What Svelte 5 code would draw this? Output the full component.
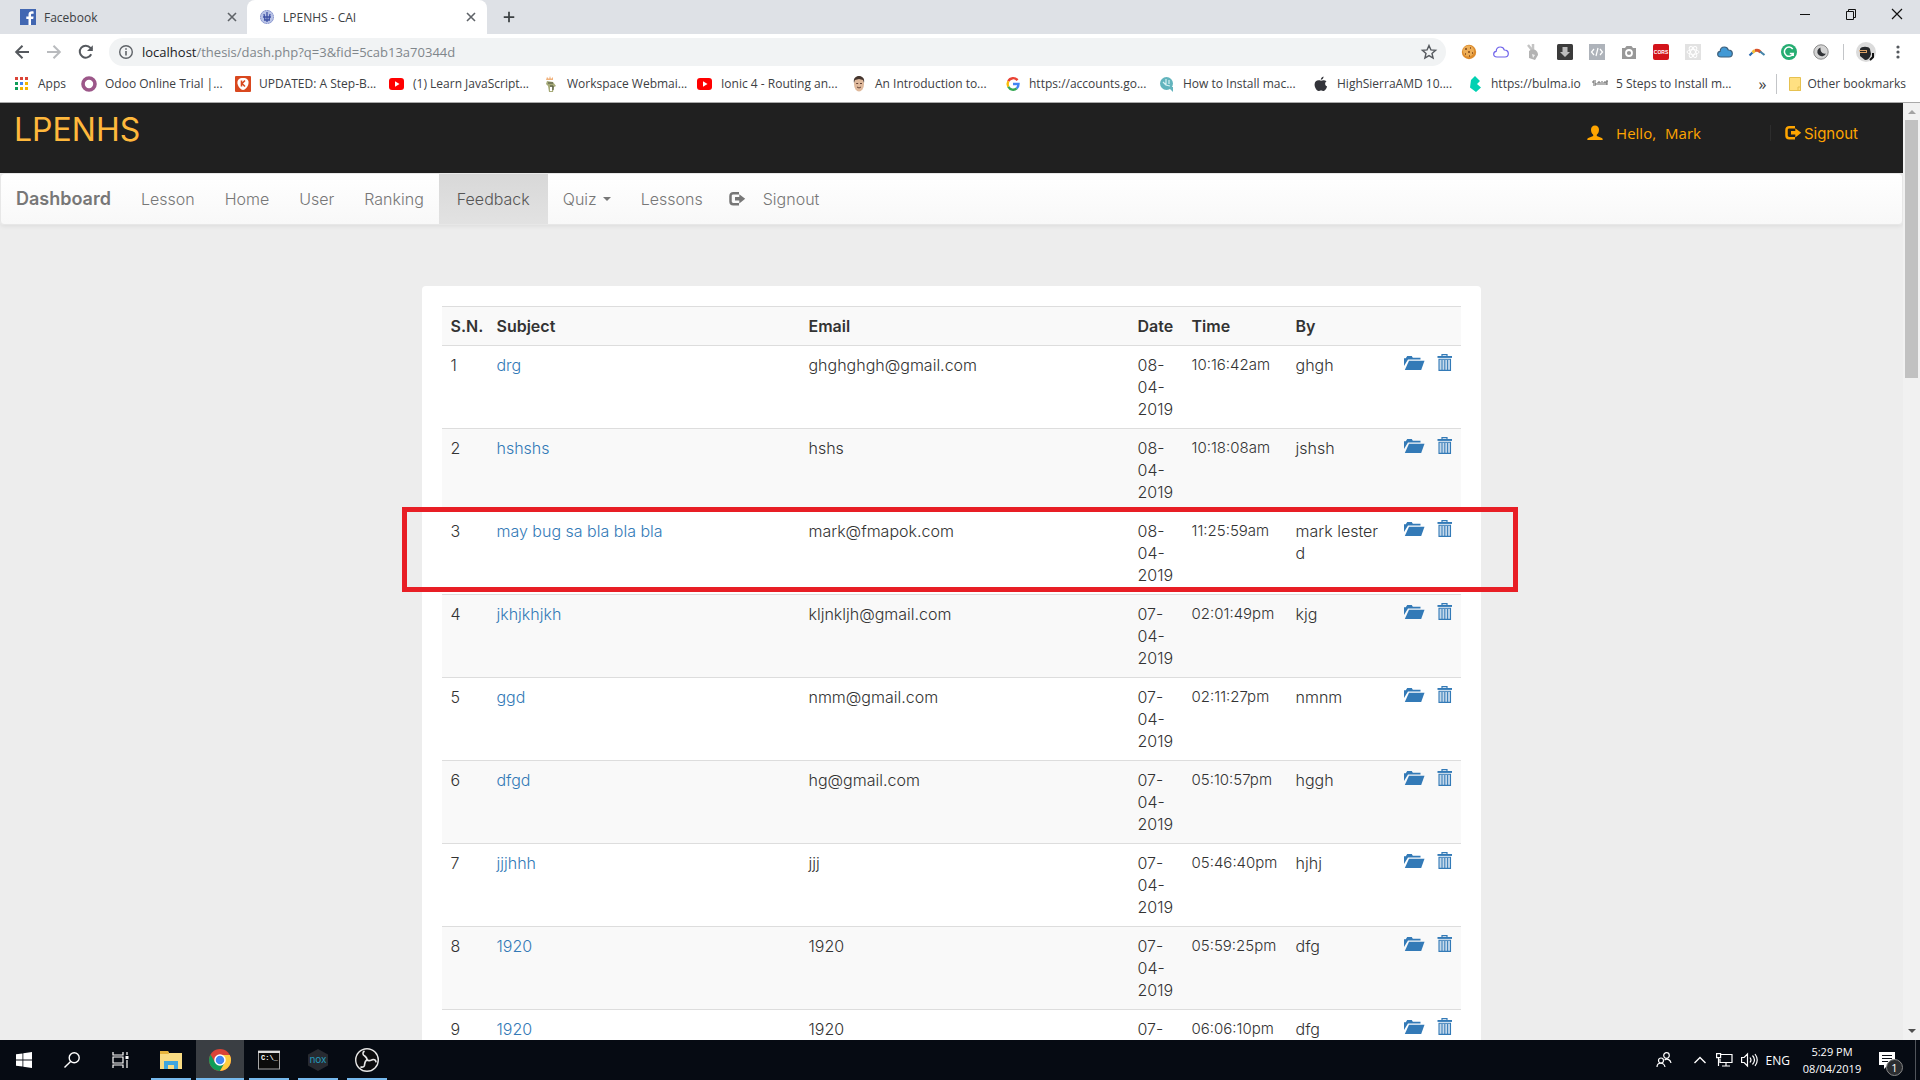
<script>
  const rows = [
    [1, 'drg', 'ghghghgh@gmail.com', '08-04-2019', '10:16:42am', 'ghgh'],
    [2, 'hshshs', 'hshs', '08-04-2019', '10:18:08am', 'jshsh'],
    [3, 'may bug sa bla bla bla', 'mark@fmapok.com', '08-04-2019', '11:25:59am', 'mark lester d'],
    [4, 'jkhjkhjkh', 'kljnkljh@gmail.com', '07-04-2019', '02:01:49pm', 'kjg'],
    [5, 'ggd', 'nmm@gmail.com', '07-04-2019', '02:11:27pm', 'nmnm'],
    [6, 'dfgd', 'hg@gmail.com', '07-04-2019', '05:10:57pm', 'hggh'],
    [7, 'jjjhhh', 'jjj', '07-04-2019', '05:46:40pm', 'hjhj'],
    [8, '1920', '1920', '07-04-2019', '05:59:25pm', 'dfg'],
    [9, '1920', '1920', '07-04-2019', '06:06:10pm', 'dfg'],
  ];
  const bookmarks = [
    ['odoo', 'Odoo Online Trial |...'],
    ['kinsta', 'UPDATED: A Step-B...'],
    ['youtube', '(1) Learn JavaScript...'],
    ['workspace', 'Workspace Webmai...'],
    ['youtube', 'Ionic 4 - Routing an...'],
    ['face', 'An Introduction to...'],
    ['google', 'https://accounts.go...'],
    ['howto', 'How to Install mac...'],
    ['apple', 'HighSierraAMD 10....'],
    ['bulma', 'https://bulma.io'],
    ['saint', '5 Steps to Install m...'],
  ];
  const extensions = ['cookie', 'cloud', 'rabbit', 'download', 'code', 'camera', 'cors', 'react', 'cloudblue', 'arc', 'grammarly', 'moon'];
  const tasks = ['explorer', 'chrome', 'cmd', 'nox', 'obs'];
</script>

{#snippet icon(name)}
  <svg class="icon" width="16" height="16" viewBox="0 0 16 16" fill="none" aria-hidden="true">
    {#if name === 'facebook'}
      <rect width="16" height="16" fill="#4267b2" /><path d="M11 16V10h2.200l.4-2.500H11V6c0-.8.3-1.300 1.400-1.300h1.200V2.500C11 2 8.500 2.500 8.500 5.600v1.900H6.300V10h2.200v6z" fill="#fff" />
    {:else if name === 'seal'}
      <circle cx="8" cy="8" r="7" fill="#b9c3e6" /><circle cx="8" cy="8" r="6.500" stroke="#8591cb" stroke-dasharray="1.500 1" /><path d="M8 3v10M5 5l1 6M11 5l-1 6M4 8h8M5 11h6" stroke="#3e51a5" stroke-width="1.300" />
    {:else if name === 'close'}
      <path d="M4 4l8 8M12 4l-8 8" stroke="#5f6368" stroke-width="1.600" />
    {:else if name === 'plus'}
      <path d="M8 2v12M2 8h12" stroke="#3c4043" stroke-width="2" />
    {:else if name === 'back'}
      <path d="M15 8H2.500M8.500 1.800L2.200 8l6.300 6.200" stroke="#55595e" stroke-width="2" />
    {:else if name === 'forward'}
      <path d="M1 8h12.500M7.500 1.800L13.800 8l-6.300 6.200" stroke="#b9bbbe" stroke-width="2" />
    {:else if name === 'reload'}
      <path d="M13.200 10.200A6 6 0 1 1 12.400 3.800L14 5.500" stroke="#55595e" stroke-width="2" /><path d="M14.800 1.200v5.800H9z" fill="#55595e" />
    {:else if name === 'info'}
      <circle cx="8" cy="8" r="6.300" stroke="#5f6368" stroke-width="1.400" /><path d="M8 7v4.500M8 4.200v1.500" stroke="#5f6368" stroke-width="1.600" />
    {:else if name === 'star'}
      <path d="M8 1.500l1.900 4.400 4.700.4-3.600 3.100 1.100 4.700L8 11.600l-4.100 2.500L5 9.400 1.400 6.300l4.700-.4z" stroke="#55595e" stroke-width="1.400" />
    {:else if name === 'apps'}
      {#each ['#db4437', '#db4437', '#db4437', '#0f9d58', '#4285f4', '#f4b400', '#0f9d58', '#f4b400', '#f4b400'] as c, i}
        <rect x={1 + (i % 3) * 5} y={1 + Math.floor(i / 3) * 5} width="3" height="3" fill={c} />
      {/each}
    {:else if name === 'odoo'}
      <circle cx="8" cy="8" r="6" stroke="#9c5789" stroke-width="3.600" />
    {:else if name === 'kinsta'}
      <rect width="16" height="16" rx="1" fill="#d9481f" /><path d="M8 2c4 0 6 2 5.500 5.500C13 11 10 14 8 14s-5-3-5.500-6.500C2 4 4 2 8 2z" fill="#fff" /><path d="M6.500 4.500v6M10 4.500L7 7.500l3 3" stroke="#d9481f" stroke-width="1.600" />
    {:else if name === 'youtube'}
      <rect y="2" width="15" height="12" rx="3" fill="#f00" /><path d="M6 5.300L10.500 8 6 10.700z" fill="#fff" />
    {:else if name === 'workspace'}
      <path d="M3 4l1-3 2 2 1-3 1 3 2-2v3z" fill="#f1b27c" /><path d="M4 5l6 1 3 4-2 1-1 5H6L5 10 3 8z" fill="#a6aa78" /><path d="M5 7h5M7 10h3v4" stroke="#4c5141" /><path d="M7 11h2v4H7z" fill="#fff" />
    {:else if name === 'face'}
      <ellipse cx="8" cy="8" rx="5" ry="7.500" fill="#dfb99c" /><path d="M3 7C2 2 5 0 8 0s6 2 5 7l-1-3-4-1-4 1z" fill="#46362f" /><path d="M5.200 7.500h2M9 7.500h2M6 11q2 2 4 0" stroke="#634235" />
    {:else if name === 'google'}
      <path d="M12.500 4.200A5.500 5.500 0 0 0 3.300 5.200" stroke="#ea4335" stroke-width="2.400" /><path d="M3.300 5.200a6 6 0 0 0 0 5.600" stroke="#fbbc05" stroke-width="2.400" /><path d="M3.300 10.800a5.500 5.500 0 0 0 8.400 1.600" stroke="#34a853" stroke-width="2.400" /><path d="M8 8h5.500c0 2-.6 3.400-1.800 4.400" stroke="#4285f4" stroke-width="2.400" />
    {:else if name === 'howto'}
      <circle cx="7.500" cy="7.500" r="6.500" fill="#62b4bd" /><path d="M9 11h5v5z" fill="#62b4bd" /><path d="M7 3v6l4 1M4 6l3 3M10 4v4" stroke="#d6f0f2" stroke-width="1.200" />
    {:else if name === 'apple'}
      <path d="M10.500.5c.2 1.800-1 3.200-2.700 3.300C7.700 2.200 9 .8 10.500.5zM8 4.800C9 4.600 10.600 3.500 13.500 5.200c-2 1.500-1.700 4.300.6 5.300-.8 2.200-2 4.500-3.500 4.500-1 0-1.400-.5-2.500-.5S6.500 15 5.600 15C3.500 15 1.400 11 1.600 8.300 1.800 4.500 5 3.700 8 4.800z" fill="#33343a" />
    {:else if name === 'bulma'}
      <path d="M8 0l5 5-3 3 4 3.500L9 16l-6-4.500L4 4z" fill="#00d1b2" />
    {:else if name === 'saint'}
      <path d="M1 5h3M1 5v2h3v2H1M6 9V6h2v3M10 5v4M12 6v3M12 6h2v3M14 5h2M15 5v4" stroke="#666" />
    {:else if name === 'folder'}
      <path d="M2.500 1.500h11v13h-11z" fill="#ffe082" stroke="#e6c150" /><path d="M11 11h2.500v3.500H11z" stroke="#e6c150" />
    {:else if name === 'cookie'}
      <circle cx="8" cy="8" r="7.200" fill="#dd8c2d" /><circle cx="7.500" cy="7" r="5.500" fill="#edae57" /><path d="M4 5h2M9 4h1M7 8h2M11 9h1M4 10h1M8 12h1" stroke="#7d451c" stroke-width="1.500" />
    {:else if name === 'cloud' || name === 'cloudblue'}
      <path d="M4 13C1.500 13 .7 11.500.7 10.200c0-1.500 1-2.700 2.500-2.900C3.300 4.700 5 3 7.400 3c2 0 3.400 1.200 3.900 3 2.500 0 4 1.300 4 3.500S14 13 12 13z" fill={name === 'cloud' ? '#fff' : '#4299d5'} stroke={name === 'cloud' ? '#6f63ea' : '#3c5f7b'} stroke-width="1.200" />
    {:else if name === 'rabbit'}
      <path d="M3 1l4 5M8 0v6" stroke="#c4c4c4" stroke-width="2.500" /><path d="M4 7c4-3 9-1 9 4l-3 5-6-2z" fill="#b3b3b3" /><path d="M7 10l3 1-2 3z" fill="#eee" />
    {:else if name === 'download'}
      <rect width="16" height="16" rx="1.500" fill="#3b3b3b" /><path d="M5.500 3h5v5H13l-5 5-5-5h2.500z" fill="#bdbdbd" />
    {:else if name === 'code'}
      <rect width="16" height="16" fill="#aeb3ba" /><path d="M5 5L2.500 8 5 11M11 5l2.500 3-2.500 3M9 4l-2 8" stroke="#fff" stroke-width="1.200" />
    {:else if name === 'camera'}
      <path d="M1 4h3l1.500-2h5L12 4h3v11H1z" fill="#989898" /><circle cx="8" cy="9" r="3" stroke="#fff" stroke-width="1.800" />
    {:else if name === 'cors'}
      <rect width="16" height="16" rx="2" fill="#d3131a" /><text x="8" y="10" class="tiny">CORS</text>
    {:else if name === 'react'}
      <rect width="16" height="16" fill="#e2e2e2" /><g stroke="#fff"><ellipse cx="8" cy="8" rx="6" ry="2.400" /><ellipse cx="8" cy="8" rx="6" ry="2.400" transform="rotate(60 8 8)" /><ellipse cx="8" cy="8" rx="6" ry="2.400" transform="rotate(120 8 8)" /></g>
    {:else if name === 'arc'}
      <path d="M.500 11.500l3-3" stroke="#2b69b1" stroke-width="2.200" /><path d="M3.500 8.500l2.500-2" stroke="#f0bf38" stroke-width="3" /><path d="M6 6.500q4-1 5.500 2" stroke="#d9532c" stroke-width="3" /><path d="M11 7.500l4.500 3.500" stroke="#4584a9" stroke-width="2.200" />
    {:else if name === 'grammarly'}
      <circle cx="8" cy="8" r="8" fill="#26ad72" /><path d="M11.700 5A4.600 4.600 0 1 0 12.200 9.500H8.800M12.200 9.500V12" stroke="#fff" stroke-width="1.500" />
    {:else if name === 'moon'}
      <circle cx="8" cy="8" r="7.200" fill="#d3d3d3" stroke="#8b8b8b" /><path d="M7.500 3.500A4.500 4.500 0 1 0 13 9.500C10 10.500 7 8 7.500 3.500z" fill="#303236" />
    {:else if name === 'dots'}
      <circle cx="8" cy="3" r="1.600" fill="#55595e" /><circle cx="8" cy="8" r="1.600" fill="#55595e" /><circle cx="8" cy="13" r="1.600" fill="#55595e" />
    {:else if name === 'min'}
      <path d="M3 8.500h10" stroke="#111" />
    {:else if name === 'restore'}
      <path d="M3.500 5.500h7v8h-7zM5.500 5V3.500h7v8H11" stroke="#111" />
    {:else if name === 'winclose'}
      <path d="M3 3l10 10M13 3L3 13" stroke="#111" stroke-width="1.200" />
    {:else if name === 'user'}
      <path d="M8 .5c2.500 0 4 1.800 4 4.200 0 2.200-.9 4-2.200 5v1.300l5 2c.7.300.9.800.9 2H.3c0-1.200.2-1.700.9-2l5-2V9.700C4.900 8.700 4 6.900 4 4.700 4 2.300 5.500.5 8 .5z" fill="currentColor" />
    {:else if name === 'signout'}
      <path d="M10 2.200H4.200A2.700 2.700 0 0 0 1.500 4.900v5.700a2.700 2.700 0 0 0 2.700 2.700H10" stroke="currentColor" stroke-width="2.500" /><path d="M6 6.100h4.300V3.200l5.900 4.600-5.900 4.600V9.500H6z" fill="currentColor" />
    {/if}
  </svg>
{/snippet}

{#snippet openIcon()}
  <svg width="20" height="16" viewBox="0 0 20 16" aria-hidden="true"><path d="M0 12V4.200h1.800L3.200 2h4.600l1 1.700h7.700v1.900H4z" fill="currentColor" /><path d="M5 6.800h15.500L17.200 16H.8z" fill="currentColor" /></svg>
{/snippet}
{#snippet trashIcon()}
  <svg width="16" height="17" viewBox="0 0 16 17" aria-hidden="true"><path d="M5 2V.6h5V2" fill="none" stroke="currentColor" stroke-width="1.200" /><path d="M.500 2H15V3.900H.5z" fill="currentColor" /><path d="M2 5.200h11.500v11.200H2z" fill="#c4d8ea" stroke="currentColor" stroke-width="1.100" /><path d="M5 6v10M7.800 6v10M10.600 6v10" stroke="currentColor" /></svg>
{/snippet}

<div class="screen">
  <header class="chrome">
    <div class="tabs">
      <div class="tab">{@render icon('facebook')}<span>Facebook</span><button aria-label="Close Facebook tab">{@render icon('close')}</button></div>
      <div class="tab active">{@render icon('seal')}<span>LPENHS - CAI</span><button aria-label="Close LPENHS tab">{@render icon('close')}</button></div>
      <button class="newtab" aria-label="New tab">{@render icon('plus')}</button>
      <div class="controls">
        <button aria-label="Minimize">{@render icon('min')}</button>
        <button aria-label="Restore">{@render icon('restore')}</button>
        <button aria-label="Close">{@render icon('winclose')}</button>
      </div>
    </div>
    <div class="toolbar">
      <button aria-label="Back">{@render icon('back')}</button>
      <button aria-label="Forward">{@render icon('forward')}</button>
      <button aria-label="Reload">{@render icon('reload')}</button>
      <div class="omnibox">
        {@render icon('info')}
        <label for="url">localhost</label>
        <input id="url" type="text" value="/thesis/dash.php?q=3&fid=5cab13a70344d" />
        <button aria-label="Bookmark this page">{@render icon('star')}</button>
      </div>
      <div class="extensions">
        {#each extensions as name}<button aria-label={name}>{@render icon(name)}</button>{/each}
      </div>
      <button class="profile" aria-label="Profile">
        <svg width="20" height="20" viewBox="0 0 20 20" aria-hidden="true"><circle cx="10" cy="10" r="10" fill="#dbdbdb" /><path d="M4 7c1-3 9-3 10 0l1 5c-1 4-3 6-6 6l-5-4z" fill="#25272a" /><path d="M3 8h8v3H4z" fill="#d9a066" /><path d="M4 9.500h6" stroke="#222" /><path d="M17 11v4l-3 3" stroke="#111" stroke-width="2" fill="none" /></svg>
      </button>
      <button aria-label="Menu">{@render icon('dots')}</button>
    </div>
    <nav class="bookmarks" aria-label="Bookmarks">
      <a href="#top" class="apps">{@render icon('apps')}Apps</a>
      {#each bookmarks as [name, label]}
        <a href="#top" class:short={name === 'bulma'}>{@render icon(name)}{label}</a>
      {/each}
      <button class="more" aria-label="More bookmarks">»</button>
      <a href="#top" class="other">{@render icon('folder')}Other bookmarks</a>
    </nav>
  </header>

  <div class="viewport">
    <main id="top">
      <div class="banner">
        <a href="#top" class="brand">LPENHS</a>
        <a href="#top" class="hello">{@render icon('user')}<span>Hello,</span><span>Mark</span></a>
        <a href="#top" class="out">{@render icon('signout')}Signout</a>
      </div>
      <nav class="menu" aria-label="Dashboard">
        <a href="#top" class="title">Dashboard</a>
        <a href="#top">Lesson</a>
        <a href="#top">Home</a>
        <a href="#top">User</a>
        <a href="#top">Ranking</a>
        <a href="#top" class="current">Feedback</a>
        <a href="#top">Quiz<i class="caret"></i></a>
        <a href="#top">Lessons</a>
        <a href="#top" class="leave">{@render icon('signout')}Signout</a>
      </nav>
      <section class="panel">
        <table>
          <colgroup><col class="c-sn" /><col class="c-subject" /><col /><col class="c-date" /><col class="c-time" /><col class="c-by" /><col class="c-act" /></colgroup>
          <thead>
            <tr><th>S.N.</th><th>Subject</th><th>Email</th><th>Date</th><th>Time</th><th>By</th><td></td></tr>
          </thead>
          <tbody>
            {#each rows as [n, subject, email, date, time, by]}
              <tr>
                <td>{n}</td>
                <td><a href="#top">{subject}</a></td>
                <td>{email}</td>
                <td>{date}</td>
                <td class="time">{time}</td>
                <td>{by}</td>
                <td><div class="actions"><a href="#top" aria-label="Open feedback">{@render openIcon()}</a><a href="#top" aria-label="Delete feedback">{@render trashIcon()}</a></div></td>
              </tr>
            {/each}
          </tbody>
        </table>
        <div class="marker"></div>
      </section>
    </main>
    <div class="scrollbar" aria-hidden="true">
      <i class="up"></i><div class="thumb"></div><i class="down"></i>
    </div>
  </div>

  <footer class="taskbar">
    <button aria-label="Start"><svg width="16" height="16" viewBox="0 0 16 16"><path d="M0 2.300L6.500 1.400V7.600H0zM7.300 1.300L16 0v7.600H7.300zM0 8.400h6.500v6.200L0 13.700zM7.300 8.400H16V16l-8.700-1.300z" fill="#fff" /></svg></button>
    <button aria-label="Search"><svg width="16" height="16" viewBox="0 0 16 16" fill="none" stroke="#fff" stroke-width="1.400"><circle cx="10.200" cy="5.800" r="5" /><path d="M6.600 9.400L.5 15.500" /></svg></button>
    <button aria-label="Task view"><svg width="17" height="16" viewBox="0 0 17 16" fill="none" stroke="#fff" stroke-width="1.200"><path d="M1 0v3h10V0M1 16v-3h10v3M1 5h10v6H1zM15 0v3M15 8v8" /><path d="M13.500 4h3v3h-3z" fill="#fff" stroke="none" /></svg></button>
    <div class="tasks">
      {#each tasks as t}
        <button class:focused={t === 'chrome'} aria-label={t}>
          <svg width="24" height="24" viewBox="0 0 24 24" fill="none" aria-hidden="true">
            {#if t === 'explorer'}
              <path d="M1 3h8l1 2h13v16H1z" fill="#f9dc83" /><path d="M1 3h8l1 3H1z" fill="#e6b43c" /><path d="M5 13h14v8h-4v-4H9v4H5z" fill="#3fa6df" />
            {:else if t === 'chrome'}
              <circle cx="12" cy="12" r="11" fill="#db4437" /><path d="M2.500 6.500A11 11 0 0 0 12 23l5-8.500H7z" fill="#0f9d58" /><path d="M12 7h9.800A11 11 0 0 1 12 23l4.500-8z" fill="#ffcd40" /><circle cx="12" cy="12" r="5" fill="#4285f4" stroke="#fff" stroke-width="1.500" />
            {:else if t === 'cmd'}
              <rect x="1.500" y="3" width="21" height="18" fill="#0b0b0b" stroke="#a5a5a5" /><path d="M1 4h22" stroke="#ddd" stroke-width="2" /><text x="4" y="12" class="prompt">C:\_</text>
            {:else if t === 'nox'}
              <path d="M12 1l10 5.500v11L12 23 2 17.500v-11z" fill="#272a30" /><text x="12" y="15" class="nox">nox</text>
            {:else}
              <circle cx="12" cy="12" r="11.300" fill="#0b0b0d" stroke="#e6e6e6" stroke-width="1.400" />
              {#each [0, 120, 240] as turn}
                <path d="M12 12.500C12.500 9 10 8.500 8.500 7C7.500 5.500 8 4 9.500 3" stroke="#e6e6e6" stroke-width="1.600" transform="rotate({turn} 12 12)" />
              {/each}
            {/if}
          </svg>
        </button>
      {/each}
    </div>
    <div class="tray">
      <svg width="16" height="16" viewBox="0 0 16 16" fill="none" stroke="#fff" stroke-width="1.200" aria-label="People"><circle cx="10.500" cy="3.500" r="2.800" /><circle cx="5" cy="8.500" r="2.500" /><path d="M1 15c0-5 7-5 8 0M8.500 8c3-2 6 0 6.500 3" /></svg>
      <svg class="chev" width="12" height="8" viewBox="0 0 12 8" fill="none" stroke="#fff" stroke-width="1.400" aria-label="Show hidden icons"><path d="M.5 7L6 1.500 11.500 7" /></svg>
      <svg width="17" height="14" viewBox="0 0 17 14" fill="none" stroke="#fff" stroke-width="1.200" aria-label="Network"><path d="M5 1.500h11v8H4V6M10 9.500V13M6 13h8M.6.6h4v4h-4zM2.500 5v8" /></svg>
      <svg width="17" height="14" viewBox="0 0 17 14" fill="none" stroke="#fff" stroke-width="1.200" aria-label="Volume"><path d="M.6 4.500h2.500L6.500 1v12L3.100 9.500H.6zM9 4.500q2 2.500 0 5M11.500 2.500q4 4.500 0 9M14 1q4.500 6 0 12" /></svg>
      <span>ENG</span>
      <div class="clock"><span>5:29 PM</span><span>08/04/2019</span></div>
      <div class="notes">
        <svg width="16" height="17" viewBox="0 0 16 17" aria-label="Notifications"><path d="M0 0h16v13H9l-4 4v-4H0z" fill="#fff" /><path d="M3 3.500h10M3 6.500h10M3 9.500h6" stroke="#0a0f17" stroke-width="1.200" /></svg>
        <span class="badge">1</span>
      </div>
    </div>
  </footer>
</div>

<style>
  :global(body) { margin: 0; overflow: hidden; }
  * { box-sizing: border-box; }
  a { color: inherit; text-decoration: none; }
  button { border: 0; padding: 0; background: none; font: inherit; color: inherit; display: flex; align-items: center; justify-content: center; }
  svg { flex: none; display: block; overflow: visible; }
  .tiny { font: 700 5px 'Liberation Sans', sans-serif; fill: #fff; text-anchor: middle; }
  .prompt { font: 700 7px 'Liberation Mono', monospace; fill: #fff; }
  .nox { font: 10px Inter, sans-serif; fill: #2499bb; text-anchor: middle; }

  .screen { height: 100vh; display: flex; flex-direction: column; font-family: 'Open Sans', 'Noto Sans', sans-serif; font-size: 12px; color: #3c4043; }
  .chrome { background: #fff; border-bottom: 1px solid #a9a9a9; }
  .tabs { display: flex; height: 34px; background: #dee1e6; }
  .tab { width: 240px; padding: 0 8px 0 12px; display: flex; align-items: center; gap: 8px; }
  .tab:first-child { width: 247px; padding: 0 7px 0 20px; }
  .tab span { flex: 1; }
  .active { background: #fff; border-radius: 8px 8px 0 0; }
  .newtab { width: 44px; }
  .newtab :global(svg) { width: 14px; height: 14px; }
  .controls { margin-left: auto; display: flex; height: 28px; }
  .controls button { width: 46px; }
  .toolbar { height: 36px; display: flex; align-items: center; padding: 0 14px; }
  .toolbar > button:nth-child(-n + 2) { margin-right: 16px; }
  .omnibox { flex: 1; height: 28px; margin-left: 15px; padding: 0 9px; border-radius: 14px; background: #f1f3f4; display: flex; align-items: center; font-size: 13px; }
  .omnibox label { margin-left: 8px; color: #202124; }
  .omnibox input { flex: 1; min-width: 0; border: 0; padding: 0; background: none; font: inherit; color: #80868b; outline: 0; }
  .extensions { display: flex; gap: 16px; margin-left: 15px; padding-right: 14px; border-right: 1px solid #c3c5c8; }
  .profile { margin: 0 14px 0 12px; }
  .toolbar > button:last-child { width: 16px; }
  .bookmarks { height: 32px; display: flex; align-items: center; padding: 0 14px 5px 14px; white-space: nowrap; }
  .bookmarks a { width: 154px; display: flex; align-items: center; gap: 8px; }
  .bookmarks .apps { width: 67px; }
  .bookmarks .short { width: 125px; }
  .bookmarks .more { margin-left: auto; padding-right: 10px; font-size: 16px; line-height: 20px; border-right: 1px solid #c3c5c8; }
  .bookmarks .other { width: auto; margin-left: 10px; gap: 4px; }

  .viewport { flex: 1; min-height: 0; display: flex; overflow: hidden; background: #ededed; }
  main { flex: 1; min-width: 0; font-family: Inter, 'Open Sans', sans-serif; font-size: 16px; font-weight: 300; line-height: 22px; color: #333; }
  .banner { height: 70px; padding: 0 45px 0 14px; display: flex; align-items: center; background: #202020; color: #ffa500; }
  .brand { margin-bottom: 17px; font-size: 32px; line-height: 32px; font-weight: 400; color: #ffb83c; }
  .hello { margin: 0 69px 10px auto; display: flex; align-items: center; gap: 9px; font-family: 'Open Sans', sans-serif; font-size: 15px; font-weight: 400; }
  .hello :global(svg) { margin-right: 4px; }
  .out { margin-bottom: 10px; padding-left: 14px; display: flex; align-items: center; gap: 3px; border-left: 1px solid #2d2d2d; font-size: 15px; line-height: 15px; font-weight: 400; }
  .menu { height: 52px; display: flex; border: 1px solid #e7e7e7; border-radius: 4px; background: linear-gradient(#fff, #f8f8f8); box-shadow: 0 1px 5px rgb(0 0 0 / 8%); color: #777; }
  .menu a { padding: 0 15px; display: flex; align-items: center; }
  .menu .title { font-size: 18px; font-weight: 600; }
  .menu .current { min-width: 109px; justify-content: center; background: linear-gradient(#d8d8d8, #e2e2e2); color: #555; }
  .menu .leave { gap: 18px; padding-left: 11px; }
  .caret { margin-left: 6px; border: 4px solid transparent; border-top-color: #777; border-bottom: 0; }
  .panel { position: relative; width: 55.6%; margin: 61px auto 0; padding: 20px; background: #fff; border-radius: 4px; }
  table { width: 100%; table-layout: fixed; border-collapse: collapse; }
  .c-sn { width: 46px; }
  .c-subject { width: 312px; }
  .c-date { width: 54px; }
  .c-time { width: 104px; }
  .c-by { width: 108px; }
  .c-act { width: 65px; }
  th, td { padding: 8px 7px 8px 8px; border-top: 1px solid #ddd; text-align: left; vertical-align: top; }
  th { font-weight: 600; }
  .time { font-size: 15px; }
  thead tr, tbody tr:nth-child(even) { background: #f9f9f9; }
  td a { color: #337ab7; }
  .actions { display: flex; gap: 13px; align-items: flex-start; }
  .marker { position: absolute; top: 221px; left: -20px; right: -37px; height: 85px; border: 5px solid #e81e25; }

  .scrollbar { width: 17px; background: #f1f1f1; display: flex; flex-direction: column; align-items: center; padding: 7px 0 7px; }
  .scrollbar i { border: 4px solid transparent; }
  .up { border-top: 0 !important; border-bottom-color: #a3a3a3 !important; }
  .down { border-bottom: 0 !important; border-top-color: #505050 !important; margin-top: auto; }
  .thumb { width: 13px; height: 28%; margin-top: 6px; background: #c1c1c1; }

  .taskbar { height: 40px; display: flex; background: #060b13; color: #fff; }
  .taskbar button { width: 48px; height: 40px; }
  .tasks { display: flex; gap: 1px; margin-left: 3px; }
  .tasks button { position: relative; }
  .tasks button::after { content: ''; position: absolute; bottom: 0; left: 4px; right: 4px; height: 2px; background: #76b9ed; }
  .tasks .focused { background: #3a3e43; }
  .tasks .focused::after { left: 0; right: 0; }
  .tray { margin-left: auto; margin-right: 4px; padding-right: 20px; display: flex; align-items: center; gap: 8px; border-right: 1px solid #50545a; }
  .tray .chev { margin: 0 2px 0 14px; }
  .clock { width: 68px; display: flex; flex-direction: column; align-items: center; line-height: 17px; font-size: 11px; }
  .notes { position: relative; margin-left: 5px; }
  .badge { position: absolute; left: 7px; top: 7px; width: 17px; height: 17px; border-radius: 50%; border: 1px solid #888; background: #2b2d30; text-align: center; line-height: 15px; font-size: 11px; }
</style>
